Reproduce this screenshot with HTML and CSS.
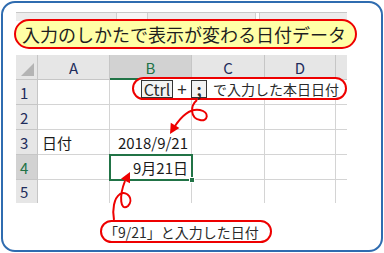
FILE: index.html
```html
<!DOCTYPE html>
<html lang="ja">
<head>
    <meta charset="UTF-8">
    <title>入力のしかたで表示が変わる日付データ</title>
    <link rel="stylesheet" href="styles.css">
</head>
<body>
    <div class="frame">
        <div class="sheet">
            <!-- formula bar strip, mostly hidden by the title -->
            <div class="strip">
                <div class="seg name-box"></div>
                <div class="seg fx"></div>
                <div class="seg formula"></div>
                <div class="seg rest"></div>
            </div>

            <div class="grid">
                <div class="hd corner"><span class="tri"></span></div>
                <div class="hd col">A</div>
                <div class="hd col active">B</div>
                <div class="hd col">C</div>
                <div class="hd col">D</div>
                <div class="hd col edge"></div>

                <div class="hd row">1</div>
                <div class="cell"></div>
                <div class="cell"></div>
                <div class="cell"></div>
                <div class="cell"></div>
                <div class="cell edge"></div>

                <div class="hd row">2</div>
                <div class="cell"></div>
                <div class="cell"></div>
                <div class="cell"></div>
                <div class="cell"></div>
                <div class="cell edge"></div>

                <div class="hd row">3</div>
                <div class="cell">日付</div>
                <div class="cell num">2018/9/21</div>
                <div class="cell"></div>
                <div class="cell"></div>
                <div class="cell edge"></div>

                <div class="hd row active">4</div>
                <div class="cell"></div>
                <div class="cell num selected">9月21日<span class="handle"></span></div>
                <div class="cell"></div>
                <div class="cell"></div>
                <div class="cell edge"></div>

                <div class="hd row last">5</div>
                <div class="cell last"></div>
                <div class="cell last"></div>
                <div class="cell last"></div>
                <div class="cell last"></div>
                <div class="cell last edge"></div>
            </div>
        </div>

        <div class="title">入力のしかたで表示が変わる日付データ</div>

        <div class="note note-key">
            <span class="key ctrl">Ctrl</span>
            <span class="plus">+</span>
            <span class="key semi">;</span>
            <span class="note-text">で入力した本日日付</span>
        </div>

        <div class="note note-typed">「9/21」と入力した日付</div>

        <!-- red curly arrows -->
        <svg class="arrows" width="384" height="253" viewBox="0 0 384 253">
            <path d="M197 100 C190 106 190 118 200 120 C208 122 210 112 200 110 C190 108 181 117 175 126" />
            <polygon points="170,134 179.4,128 170.8,122.8" />
            <path d="M114 220 C112 210 114 198 120 194 C128 190 134 200 128 206 C120 212 119 196 125 181" />
            <polygon points="130,172 130,183.2 121,178.7" />
        </svg>
    </div>
</body>
</html>
```

FILE: styles.css
```css
* {
    margin: 0;
    padding: 0;
    box-sizing: border-box;
}

body {
    width: 384px;
    height: 253px;
    background: #fff;
    font-family: "Noto Sans CJK JP", "Noto Sans", sans-serif;
    color: #222;
    position: relative;
    overflow: hidden;
}

.frame {
    position: relative;
    margin: 1px;
    width: 382px;
    height: 251px;
    border: 2px solid #2f6cb0;
    border-radius: 14px;
    padding: 9px 0 0 13px;
}

/* formula bar strip */
.strip {
    display: flex;
    width: 331px;
    height: 43px;
    border-top: 1px solid #c8c8c8;
    align-items: flex-start;
}

.seg {
    height: 8px;
    background: #ececec;
    border-right: 1px solid #cfcfcf;
}

.name-box { width: 101px; }
.fx { width: 31px; background: #f6f6f6; }
.formula { width: 108px; }
.rest { flex: 1; margin-left: 3px; border-left: 1px solid #cfcfcf; border-right: none; }

/* sheet grid */
.grid {
    display: grid;
    grid-template-columns: 22px 72px 82px 73px 71px 11px;
    grid-template-rows: 25px 25px 25px 25px 25px 23px;
    width: 331px;
}

.hd {
    background: #e6e6e6;
    border-right: 1px solid #c6c6c6;
    border-bottom: 1px solid #c6c6c6;
    font-size: 15px;
    color: #1f2d5c;
    display: flex;
    align-items: center;
}

.hd.col {
    justify-content: center;
    padding-top: 1px;
}

.hd.row {
    padding-left: 4px;
}

.hd.active {
    background: #d2d2d2;
    color: #217346;
}

.hd.col.active {
    border-bottom: 2px solid #217346;
}

.hd.edge {
    border-right: none;
}

.corner {
    position: relative;
}

.tri {
    position: absolute;
    right: 3px;
    bottom: 3px;
    width: 0;
    height: 0;
    border-left: 13px solid transparent;
    border-bottom: 13px solid #b4b4b4;
}

.cell {
    border-right: 1px solid #d4d4d4;
    border-bottom: 1px solid #d4d4d4;
    font-size: 15px;
    color: #1a1a1a;
    display: flex;
    align-items: center;
    padding: 0 4px;
}

.cell.num {
    justify-content: flex-end;
    padding-right: 3px;
}

.cell.edge {
    border-right: none;
}

.cell.last,
.hd.last {
    border-bottom: none;
}

.selected {
    position: relative;
    outline: 2px solid #217346;
    outline-offset: -1px;
}

.handle {
    position: absolute;
    right: -4px;
    bottom: -4px;
    width: 6px;
    height: 6px;
    background: #217346;
    border: 1px solid #fff;
}

/* callouts */
.title {
    position: absolute;
    left: 11px;
    top: 16px;
    width: 343px;
    height: 30px;
    border: 2px solid #ee0000;
    border-radius: 15px;
    background: #ffffa6;
    font-size: 18px;
    line-height: 26px;
    padding-left: 6px;
    color: #1e1e1e;
}

.note {
    position: absolute;
    height: 23px;
    border: 2px solid #ee0000;
    border-radius: 12px;
    background: #fff;
    font-size: 14px;
    color: #2a2a2a;
    display: flex;
    align-items: center;
}

.note-key {
    left: 129px;
    top: 74px;
    width: 215px;
    padding-left: 7px;
}

.key {
    border: 1px solid #333;
    background: #f2f2f2;
    height: 18px;
    line-height: 16px;
    font-size: 16px;
    text-align: center;
}

.ctrl {
    width: 32px;
}

.plus {
    font-size: 17px;
    width: 18px;
    text-align: center;
}

.semi {
    width: 16px;
    font-weight: bold;
}

.note-text {
    margin-left: 6px;
}

.note-typed {
    left: 97px;
    top: 217px;
    width: 172px;
    padding-left: 2px;
}

.arrows {
    position: absolute;
    left: -3px;
    top: -3px;
}

.arrows path {
    fill: none;
    stroke: #ee0000;
    stroke-width: 2;
}

.arrows polygon {
    fill: #ee0000;
}
```
